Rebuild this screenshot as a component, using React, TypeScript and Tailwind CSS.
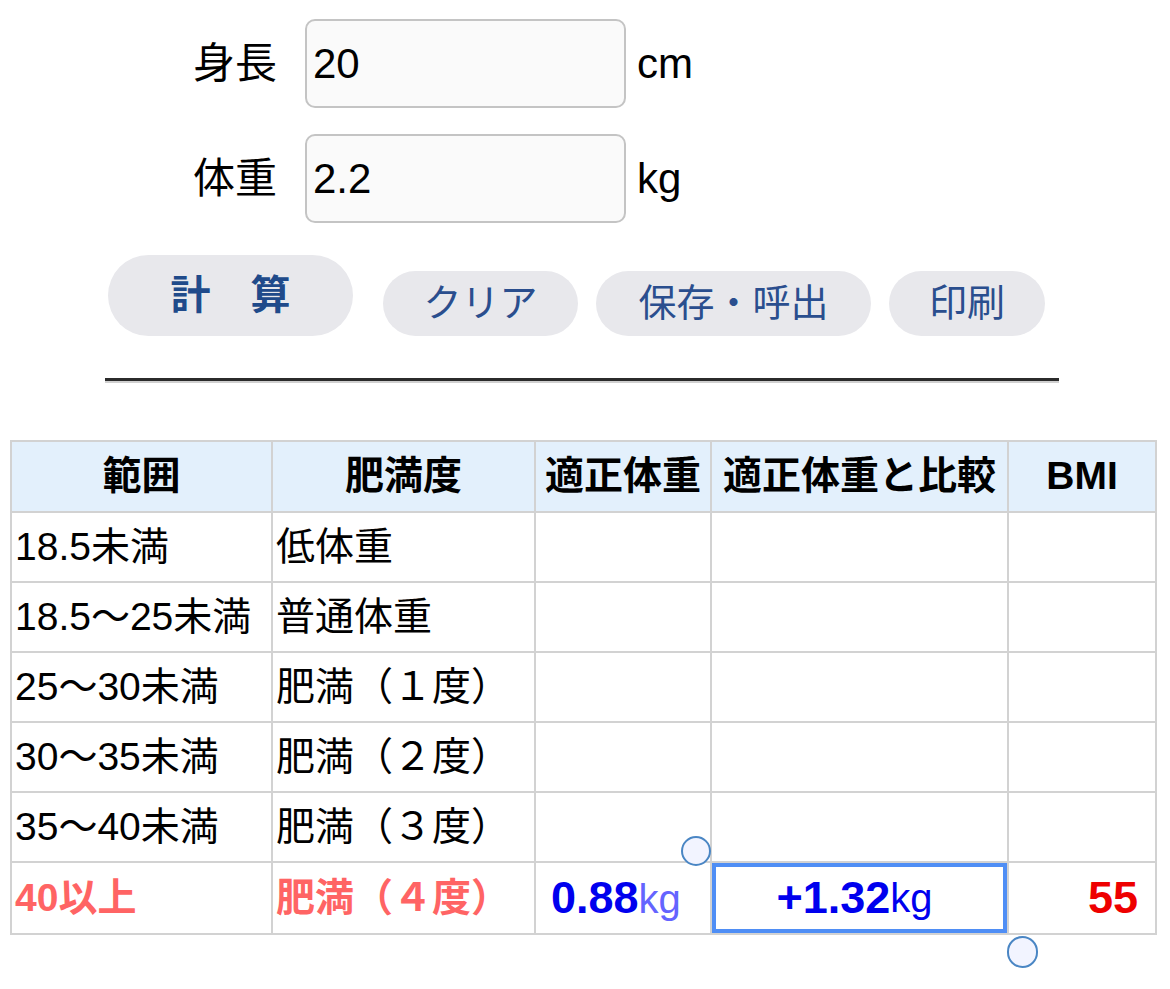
import React from "react";

const font = { fontFamily: '"Liberation Sans", "Noto Sans CJK JP", sans-serif' };

interface FieldRowProps {
    label: string
    value: string
    unit: string
}

const FieldRow: React.FC<FieldRowProps> = ({label, value, unit}) => {
    return (
        <div className="flex items-center">
            <span className="w-[85px] text-[42px] leading-none text-black">{label}</span>
            <input
                readOnly
                value={value}
                className="ml-[27px] w-[321px] h-[89px] rounded-[10px] border-2 border-[#c4c4c4] bg-[#fafafa] px-[6px] text-[42px] text-black outline-none"
                style={font}
            />
            <span className="ml-[11px] text-[42px] leading-none text-black">{unit}</span>
        </div>
    )
}

const rows = [
    ["18.5未満", "低体重"],
    ["18.5～25未満", "普通体重"],
    ["25～30未満", "肥満（１度）"],
    ["30～35未満", "肥満（２度）"],
    ["35～40未満", "肥満（３度）"],
]

const cell = "border-2 border-[#d2d2d2] px-[3px] text-left align-middle"

export default function App() {
    return (
        <div className="min-h-screen w-[1170px] bg-white pt-[19px]" style={font}>
            <div className="ml-[193px] flex flex-col gap-[26px]">
                <FieldRow label="身長" value="20" unit="cm"/>
                <FieldRow label="体重" value="2.2" unit="kg"/>
            </div>

            <div className="mt-[32px] ml-[108px] flex items-end">
                <button className="flex h-[81px] w-[245px] items-center justify-center rounded-full bg-[#e8e8ec] pb-[2px] text-[40px] font-bold text-[#204a8a]">
                    計　算
                </button>
                <button className="ml-[30px] h-[65px] w-[195px] rounded-full bg-[#e8e8ec] text-[38px] text-[#2a4e8e]">
                    クリア
                </button>
                <button className="ml-[18px] h-[65px] w-[275px] rounded-full bg-[#e8e8ec] text-[38px] text-[#2a4e8e]">
                    保存・呼出
                </button>
                <button className="ml-[18px] h-[65px] w-[156px] rounded-full bg-[#e8e8ec] text-[38px] text-[#2a4e8e]">
                    印刷
                </button>
            </div>

            <div className="mt-[42px] ml-[105px] w-[954px] border-t-[3px] border-b-2 border-t-[#2b2b2b] border-b-[#d0d0d0]"/>

            <div className="relative mt-[57px] ml-[10px] w-[1145px]">
                <table className="w-[1145px] table-fixed border-collapse text-[39px] text-black">
                    <colgroup>
                        <col className="w-[261px]"/>
                        <col className="w-[263px]"/>
                        <col className="w-[176px]"/>
                        <col className="w-[297px]"/>
                        <col className="w-[148px]"/>
                    </colgroup>
                    <thead>
                        <tr className="h-[71px] bg-[#e3f0fc]">
                            <th className="border-2 border-[#d2d2d2] text-center font-bold whitespace-nowrap">範囲</th>
                            <th className="border-2 border-[#d2d2d2] text-center font-bold whitespace-nowrap">肥満度</th>
                            <th className="border-2 border-[#d2d2d2] text-center font-bold whitespace-nowrap">適正体重</th>
                            <th className="border-2 border-[#d2d2d2] text-center font-bold whitespace-nowrap">適正体重と比較</th>
                            <th className="border-2 border-[#d2d2d2] text-center font-bold whitespace-nowrap">BMI</th>
                        </tr>
                    </thead>
                    <tbody>
                        {rows.map(([range, level]) => (
                            <tr key={range} className="h-[70px]">
                                <td className={`${cell} whitespace-nowrap`}>{range}</td>
                                <td className={`${cell} whitespace-nowrap`}>{level}</td>
                                <td className={cell}></td>
                                <td className={cell}></td>
                                <td className={cell}></td>
                            </tr>
                        ))}
                        <tr className="h-[72px]">
                            <td className={`${cell} font-bold text-[#ff6464] whitespace-nowrap`}>40以上</td>
                            <td className={`${cell} font-bold text-[#ff6464] whitespace-nowrap`}>肥満（４度）</td>
                            <td className="border-2 border-[#d2d2d2] pl-[15px] text-left align-middle whitespace-nowrap">
                                <span className="text-[45px] font-bold text-[#0000ee]">0.88</span>
                                <span className="text-[40px] text-[#6464ff]">kg</span>
                            </td>
                            <td className="border-2 border-[#d2d2d2] align-middle whitespace-nowrap p-0">
                                <div className="flex h-[70px] items-center justify-center border-[4px] border-[#4f8ef5] pr-[10px]">
                                    <span className="text-[45px] font-bold text-[#0000ee]">+1.32</span>
                                    <span className="text-[40px] text-[#0000ee]">kg</span>
                                </div>
                            </td>
                            <td className="border-2 border-[#d2d2d2] pr-[17px] text-right align-middle">
                                <span className="text-[45px] font-bold text-[#ee0000]">55</span>
                            </td>
                        </tr>
                    </tbody>
                </table>

                <div className="absolute left-[671px] top-[396px] h-[30px] w-[30px] rounded-full border-2 border-[#4a86c4] bg-[#f2f4ff]"/>
                <div className="absolute left-[997px] top-[496px] h-[32px] w-[31px] rounded-full border-2 border-[#4a86c4] bg-[#f2f4ff]"/>
            </div>
        </div>
    )
}
